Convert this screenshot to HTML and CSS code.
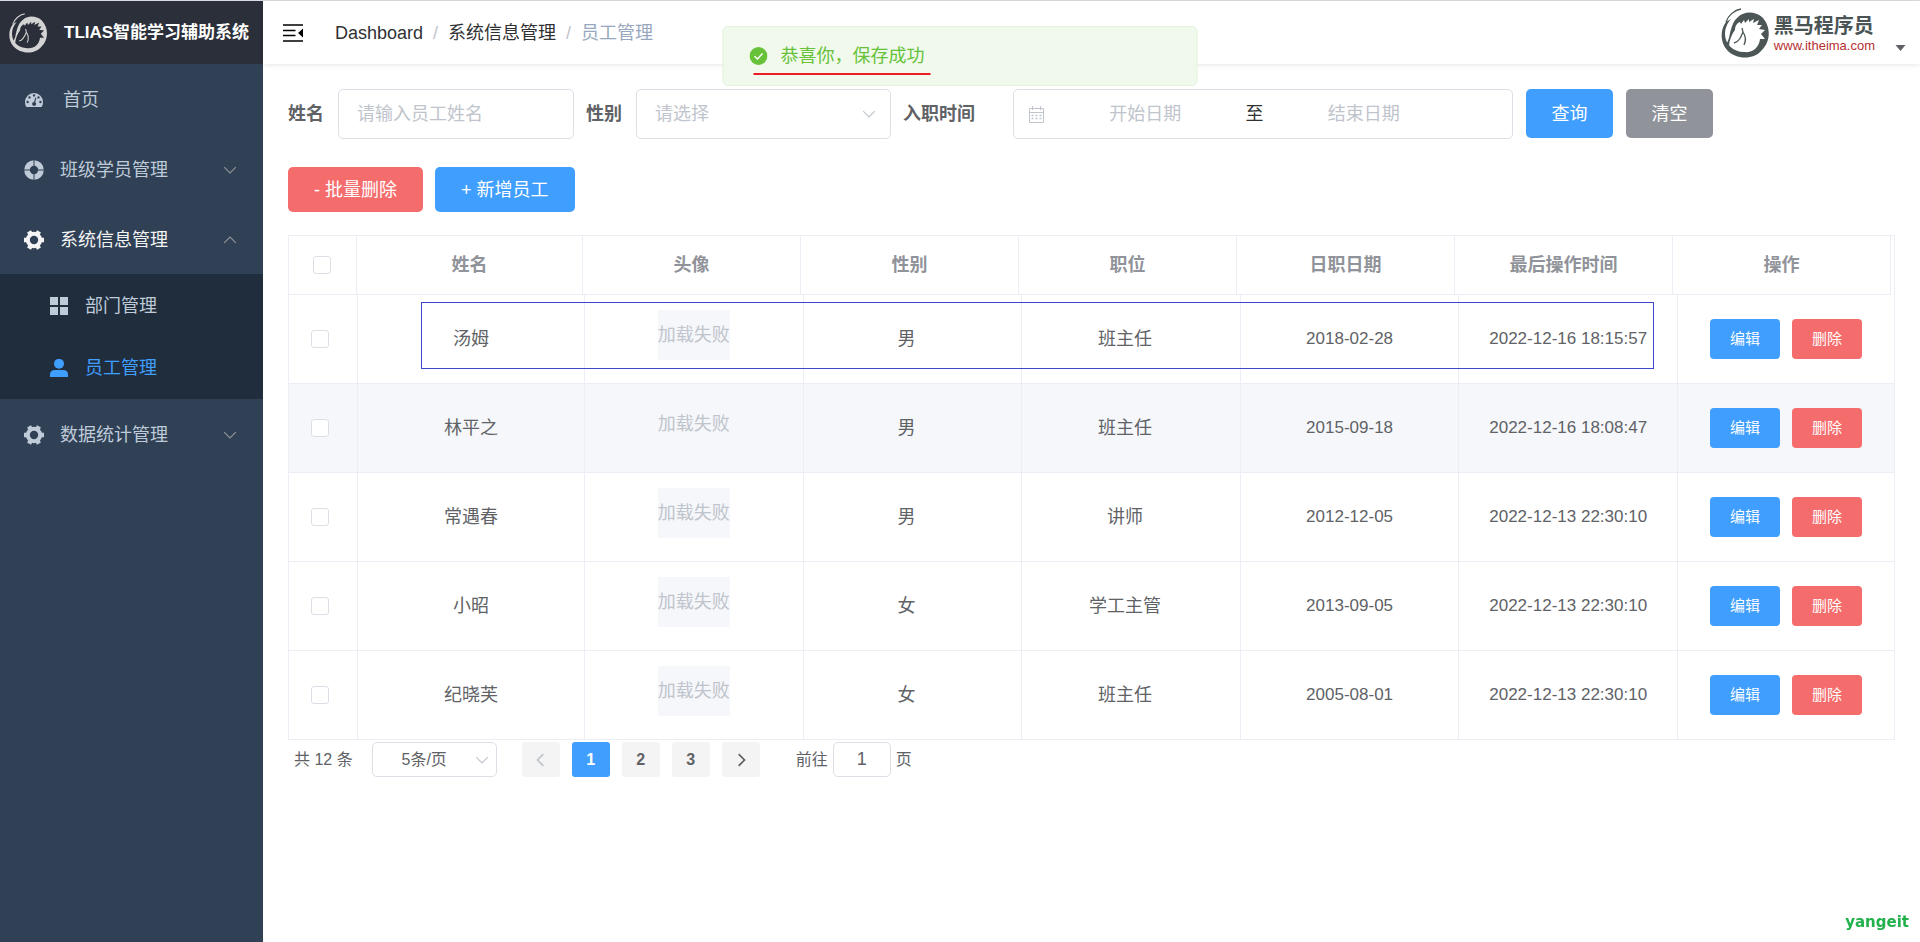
FILE: index.html
```html
<!DOCTYPE html>
<html lang="zh-CN">
<head>
<meta charset="utf-8">
<meta name="viewport" content="width=device-width, initial-scale=1">
<title>TLIAS智能学习辅助系统</title>
<link rel="stylesheet" href="styles.css">
</head>
<body>
<svg class="defs" aria-hidden="true">
  <symbol id="i-down" viewBox="0 0 12 12"><path d="M1 3.500 6 8.500 11 3.500" fill="none" stroke="currentColor"/></symbol>
  <symbol id="i-up" viewBox="0 0 12 12"><path d="M1 8.500 6 3.500 11 8.500" fill="none" stroke="currentColor"/></symbol>
  <symbol id="i-gear" viewBox="0 0 20 20">
    <circle cx="10" cy="10" r="6.200" fill="none" stroke="currentColor" stroke-width="4"/>
    <path fill="none" stroke="currentColor" stroke-width="4.500" d="M17 10H20M3 10H0M13.500 16.060 15 18.660M6.500 3.940 5 1.340M13.500 3.940 15 1.340M6.500 16.060 5 18.660"/>
  </symbol>
  <symbol id="i-horse" viewBox="0 0 48 50">
    <path fill="currentColor" d="M5 14C-1 22-1 34 6 42 14 51 32 53 41 42 50 33 50 18 41 9 34 3 23 3 17 9 12 13 10 20 8 30L6 35 8 38 8.500 34C10 29 11 26 14 22 14 18 16 15 19 14L20 16 23 12 24 15 28 11 28 14 33 11 32 15 38 12 36 17 41 17 38 21 44 22 40 26 44 31 39 31C38 40 31 45 23 44 12 44 4 36 4 26 4 20 6 16 10 11Z"/>
    <path fill="none" stroke="currentColor" stroke-width="1.300" d="M20 1C13 2 7 8 5 14M13 35C18 34 20 29 22 24L21 20M22 24C24 27 26 31 23 37"/>
  </symbol>
</svg>
<div class="app">
  <aside class="sidebar">
    <div class="brand">
      <svg class="brand-logo"><use href="#i-horse"/></svg>
      <h1 class="brand-title">TLIAS智能学习辅助系统</h1>
    </div>
    <nav class="menu">
      <a class="menu-item home" href="#">
        <svg class="menu-icon" viewBox="0 0 20 20"><path fill="currentColor" fill-rule="evenodd" d="M10 3a9 9 0 0 0-9 9.200c0 1.700.400 3.200 1.200 4.500.200.300.400.300.700.300h14.200c.300 0 .500 0 .700-.300.800-1.300 1.200-2.800 1.200-4.500A9 9 0 0 0 10 3ZM10 4.200a1.200 1.200 0 1 1 0 2.400 1.200 1.200 0 0 1 0-2.400ZM5.500 6.200a1.200 1.200 0 1 1 0 2.400 1.200 1.200 0 0 1 0-2.400ZM3.600 10.800a1.200 1.200 0 1 1 0 2.400 1.200 1.200 0 0 1 0-2.400ZM14.500 6.200a1.200 1.200 0 1 1 0 2.400 1.200 1.200 0 0 1 0-2.400ZM16.400 10.800a1.200 1.200 0 1 1 0 2.400 1.200 1.200 0 0 1 0-2.400ZM11.300 7.600l1 .300-1.100 4.300a2 2 0 1 1-1.200-.300Z"/></svg>
        <span>首页</span>
      </a>
      <a class="menu-item" href="#">
        <svg class="menu-icon" viewBox="0 0 20 20"><circle cx="10" cy="10" r="7" fill="none" stroke="currentColor" stroke-width="5.600"/><path class="cut" d="M10 0V6M10 14V20M0 10H6M14 10H20"/></svg>
        <span>班级学员管理</span>
        <svg class="menu-arrow"><use href="#i-down"/></svg>
      </a>
      <a class="menu-item open" href="#">
        <svg class="menu-icon"><use href="#i-gear"/></svg>
        <span>系统信息管理</span>
        <svg class="menu-arrow"><use href="#i-up"/></svg>
      </a>
      <div class="submenu">
        <a class="menu-item sub" href="#">
          <svg class="sub-icon" viewBox="0 0 18 18"><path fill="currentColor" d="M0 0H8V8H0ZM10 0H18V8H10ZM0 10H8V18H0ZM10 10H18V18H10Z"/></svg>
          <span>部门管理</span>
        </a>
        <a class="menu-item sub current" href="#" aria-current="page">
          <svg class="sub-icon" viewBox="0 0 18 18"><circle cx="9" cy="4.800" r="5" fill="currentColor"/><path fill="currentColor" d="M0 18V15.500Q0 11 5 11H13Q18 11 18 15.500V18Z"/></svg>
          <span>员工管理</span>
        </a>
      </div>
      <a class="menu-item" href="#">
        <svg class="menu-icon"><use href="#i-gear"/></svg>
        <span>数据统计管理</span>
        <svg class="menu-arrow"><use href="#i-down"/></svg>
      </a>
    </nav>
  </aside>

  <div class="main">
    <header class="topbar">
      <button class="fold" type="button" aria-label="折叠菜单">
        <svg viewBox="0 0 20 18"><path d="M0 1H20M0 6.500H12.500M0 11.500H12.500M0 17H20" fill="none" stroke="#000" stroke-width="1.600"/><path d="M20 4.500V13.500L15 9Z"/></svg>
      </button>
      <nav class="crumbs" aria-label="路径">
        <a href="#">Dashboard</a><span class="sep">/</span><a href="#">系统信息管理</a><span class="sep">/</span><span class="here">员工管理</span>
      </nav>
      <button class="account" type="button" aria-label="账户菜单">
        <svg class="account-logo"><use href="#i-horse"/></svg>
        <span class="account-text"><strong>黑马程序员</strong><span>www.itheima.com</span></span>
        <svg class="caret" viewBox="0 0 10 6"><path d="M0 0H10L5 6Z" fill="currentColor"/></svg>
      </button>
    </header>

    <main class="content">
      <form class="filters">
        <label for="f-name">姓名</label>
        <input class="field name-field" id="f-name" type="text" placeholder="请输入员工姓名">
        <label for="f-gender">性别</label>
        <div class="select gender-field">
          <select class="field" id="f-gender"><option>请选择</option><option>男</option><option>女</option></select>
          <svg class="select-arrow"><use href="#i-down"/></svg>
        </div>
        <label class="wide" for="f-start">入职时间</label>
        <div class="range field">
          <svg class="calendar" viewBox="0 0 17 17"><path fill="none" stroke="currentColor" d="M1.500 2.500H15.500V16.500H1.500ZM1.500 6.500H15.500M4.500 0V4M12.500 0V4"/><path stroke="currentColor" stroke-width="1.500" stroke-dasharray="2 2" d="M3.500 9.500H14M3.500 12.500H14"/></svg>
          <input id="f-start" type="text" placeholder="开始日期">
          <span>至</span>
          <input type="text" placeholder="结束日期" aria-label="结束日期">
        </div>
        <button class="btn primary search" type="button">查询</button>
        <button class="btn info search" type="reset">清空</button>
      </form>

      <div class="actions">
        <button class="btn danger" type="button">- 批量删除</button>
        <button class="btn primary" type="button">+ 新增员工</button>
      </div>

      <div class="table-wrap">
        <table class="grid">
          <thead>
            <tr><th class="pick"><input type="checkbox" aria-label="全选"></th><th class="name">姓名</th><th>头像</th><th>性别</th><th>职位</th><th>日职日期</th><th>最后操作时间</th><th>操作</th></tr>
          </thead>
          <tbody>
            <tr><td class="pick"><input type="checkbox" aria-label="选择汤姆"></td><td class="name">汤姆</td><td class="photo"><span>加载失败</span></td><td class="tight">男</td><td class="tight">班主任</td><td class="date">2018-02-28</td><td class="date">2022-12-16 18:15:57</td><td><div class="ops"><button class="btn small primary" type="button">编辑</button><button class="btn small danger" type="button">删除</button></div></td></tr>
            <tr class="hover"><td class="pick"><input type="checkbox" aria-label="选择林平之"></td><td class="name">林平之</td><td class="photo"><span>加载失败</span></td><td class="tight">男</td><td class="tight">班主任</td><td class="date">2015-09-18</td><td class="date">2022-12-16 18:08:47</td><td><div class="ops"><button class="btn small primary" type="button">编辑</button><button class="btn small danger" type="button">删除</button></div></td></tr>
            <tr><td class="pick"><input type="checkbox" aria-label="选择常遇春"></td><td class="name">常遇春</td><td class="photo"><span>加载失败</span></td><td class="tight">男</td><td class="tight">讲师</td><td class="date">2012-12-05</td><td class="date">2022-12-13 22:30:10</td><td><div class="ops"><button class="btn small primary" type="button">编辑</button><button class="btn small danger" type="button">删除</button></div></td></tr>
            <tr><td class="pick"><input type="checkbox" aria-label="选择小昭"></td><td class="name">小昭</td><td class="photo"><span>加载失败</span></td><td class="tight">女</td><td class="tight">学工主管</td><td class="date">2013-09-05</td><td class="date">2022-12-13 22:30:10</td><td><div class="ops"><button class="btn small primary" type="button">编辑</button><button class="btn small danger" type="button">删除</button></div></td></tr>
            <tr><td class="pick"><input type="checkbox" aria-label="选择纪晓芙"></td><td class="name">纪晓芙</td><td class="photo"><span>加载失败</span></td><td class="tight">女</td><td class="tight">班主任</td><td class="date">2005-08-01</td><td class="date">2022-12-13 22:30:10</td><td><div class="ops"><button class="btn small primary" type="button">编辑</button><button class="btn small danger" type="button">删除</button></div></td></tr>
          </tbody>
        </table>
        <div class="mark"></div>
      </div>

      <nav class="pager" aria-label="分页">
        <span class="total">共 12 条</span>
        <div class="select size-field">
          <select class="field" aria-label="每页条数"><option>5条/页</option><option>10条/页</option></select>
          <svg class="select-arrow"><use href="#i-down"/></svg>
        </div>
        <div class="pages">
          <button type="button" disabled aria-label="上一页"><svg viewBox="0 0 12 12"><path d="M8 1 3 6 8 11"/></svg></button>
          <button class="on" type="button">1</button>
          <button type="button">2</button>
          <button type="button">3</button>
          <button type="button" aria-label="下一页"><svg viewBox="0 0 12 12"><path d="M4 1 9 6 4 11"/></svg></button>
        </div>
        <label class="jump">前往<input class="field" type="text" value="1">页</label>
      </nav>
    </main>
  </div>
</div>

<div class="toast" role="status">
  <svg viewBox="0 0 18 18"><circle cx="9" cy="9" r="9" fill="currentColor"/><path d="M5 9.200 8 12 13 6.500" fill="none" stroke="#fff" stroke-width="1.500"/></svg>
  <p>恭喜你，保存成功</p>
  <i class="toast-line"></i>
</div>
<div class="signature">yangeit</div>
</body>
</html>
```
FILE: styles.css
```css
* { box-sizing: border-box; }

body {
  margin: 0;
  background: #fff;
  color: #606266;
  font: 18px/24px "Liberation Sans", "Noto Sans CJK SC", sans-serif;
}

a { color: inherit; text-decoration: none; }
button, input, select { font: inherit; color: inherit; margin: 0; }
button { border: 0; padding: 0; background: none; cursor: pointer; }
.defs { position: absolute; width: 0; height: 0; }

.app {
  display: flex;
  min-height: 100vh;
  border-top: 1px solid #dcdde2;
}

/* Sidebar */
.sidebar { flex: 0 0 263px; background: #304156; color: #bfcbd9; }

.brand {
  display: flex;
  align-items: center;
  gap: 16px;
  height: 63px;
  padding-left: 8px;
  background: #2b2f3a;
  color: #fff;
}
.brand-logo { flex: none; width: 40px; height: 40px; color: #d3d3d3; }
.brand-title { margin: 0; font-size: 17px; white-space: nowrap; }

.menu-item { display: flex; align-items: center; height: 70px; padding: 1px 26px 0 24px; gap: 16px; }
.menu-icon { width: 20px; height: 20px; }
.menu-icon .cut { stroke: #304156; }
.menu-item.home { gap: 19px; }
.menu-arrow { width: 14px; height: 14px; margin-left: auto; color: #909399; }
.menu-item.open { color: #f4f4f5; }
.submenu { padding-bottom: 1px; background: #1f2d3d; }
.menu-item.sub { height: 62px; padding-left: 50px; gap: 17px; }
.sub-icon { width: 18px; height: 18px; }
.menu-item.current { color: #409eff; }

/* Top bar */
.main { flex: 1; min-width: 0; }
.topbar {
  display: flex;
  align-items: center;
  height: 63px;
  padding: 0 14px 0 20px;
  box-shadow: 0 1px 5px rgba(0, 21, 41, .1);
}
.fold { width: 20px; height: 18px; }
.fold svg { display: block; }
.crumbs { display: flex; gap: 10px; margin-left: 32px; color: #303133; }
.crumbs .sep { color: #c0c4cc; }
.crumbs .here { color: #97a8be; }
.account { display: flex; align-items: center; gap: 5px; margin-left: auto; }
.account-logo { width: 48px; height: 50px; color: #4c5657; }
.account-text { display: grid; text-align: left; }
.account-text strong { color: #4a5455; font-size: 20px; line-height: 26px; }
.account-text span { color: #b52f2f; font-size: 13px; line-height: 14px; }
.caret { width: 11px; height: 6px; margin: 30px 0 0 15px; }

/* Shared controls */
.field {
  height: 50px;
  border: 1px solid #dcdfe6;
  border-radius: 5px;
  background: #fff;
  outline: 0;
}
.select { position: relative; }
.select .field { width: 100%; padding: 0 18px; appearance: none; }
.select-arrow {
  position: absolute;
  top: 50%;
  right: 15px;
  width: 14px;
  height: 14px;
  margin-top: -7px;
  color: #c0c4cc;
  pointer-events: none;
}
::placeholder { color: #c0c4cc; opacity: 1; }

.btn { height: 45px; padding: 0 26px; border-radius: 5px; color: #fff; white-space: nowrap; }
.primary { background: #409eff; }
.danger { background: #f56c6c; }
.info { background: #909399; }

/* Filters */
.content { padding: 25px; }
.filters { display: flex; align-items: center; }
.filters label { margin-right: 14px; font-weight: 700; white-space: nowrap; }
.filters label.wide { width: 96px; }
.name-field { width: 236px; padding: 0 18px; margin-right: 12px; }
.gender-field { width: 255px; margin-right: 12px; }
.gender-field .field { color: #c0c4cc; }
.range { display: flex; align-items: center; width: 500px; padding: 0 48px 0 14px; }
.range input { flex: 1; min-width: 0; border: 0; padding: 0; outline: 0; text-align: center; }
.range span { color: #303133; }
.calendar { flex: none; width: 17px; height: 17px; color: #c0c4cc; }
.search { align-self: flex-start; width: 87px; height: 49px; padding: 0; margin-left: 13px; }

.actions { display: flex; gap: 12px; margin: 28px 0 23px; }

/* Table */
.table-wrap { position: relative; border: 1px solid #ebeef5; border-bottom: 0; }
.grid { display: block; }
.grid thead, .grid tbody {
  display: table;
  width: 100%;
  table-layout: fixed;
  border-spacing: 0;
}
.grid thead { width: calc(100% - 3px); }
.grid th, .grid td {
  padding: 0;
  border: solid #ebeef5;
  border-width: 0 1px 1px 0;
  text-align: center;
}
.grid th { height: 59px; color: #909399; }
.grid td { height: 89px; }
.grid .pick { width: 69px; padding-right: 6px; }
.grid th.pick { width: 68px; padding-right: 2px; }
.grid .name { width: 227px; }
.grid th.name { width: 226px; }
.grid .tight { padding-right: 12px; }
.grid .date { font-size: 17px; }
.grid td:last-child { width: 216px; border-right: 0; }
.grid .hover { background: #f5f7fa; }
.pick input {
  display: block;
  width: 18px;
  height: 18px;
  margin: 0 auto;
  border: 1px solid #dcdfe6;
  border-radius: 3px;
  background: #fff;
  appearance: none;
}
.photo span {
  display: block;
  width: 72px;
  margin: 0 auto 8px;
  background: #f5f7fa;
  color: #c0c4cc;
  line-height: 50px;
}
.ops { display: flex; justify-content: center; gap: 12px; }
.small { width: 70px; height: 40px; padding: 0; border-radius: 4px; font-size: 15px; }
.mark {
  position: absolute;
  top: 66px;
  right: 240px;
  left: 132px;
  height: 67px;
  border: 1px solid #3f48cc;
  pointer-events: none;
}

/* Pagination */
.pager { display: flex; align-items: center; margin-top: 2px; padding-left: 6px; font-size: 16px; }
.pager .field { height: 35px; }
.total { margin-right: 19px; }
.size-field { width: 125px; }
.size-field .field { padding: 0 20px 0 0; text-align: center; text-align-last: center; }
.size-field .select-arrow { right: 8px; }
.pages { display: flex; gap: 12px; margin: 0 36px 0 25px; }
.pages button { width: 38px; height: 35px; border-radius: 3px; background: #f4f4f5; font-weight: 700; }
.pages svg { display: block; width: 14px; height: 14px; margin: auto; fill: none; stroke: #606266; stroke-width: 1.5; }
.pages button:disabled svg { stroke: #c0c4cc; }
.pages .on { background: #409eff; color: #fff; }
.jump { display: flex; align-items: center; gap: 5px; }
.jump .field { width: 58px; text-align: center; font-size: 18px; }

/* Success message */
.toast {
  position: fixed;
  top: 26px;
  left: 50%;
  display: flex;
  align-items: center;
  gap: 13px;
  width: 475px;
  height: 60px;
  padding: 0 26px;
  border: 1px solid #e1f3d8;
  border-radius: 5px;
  background: #f0f9eb;
  color: #67c23a;
  transform: translateX(-50%);
}
.toast svg { width: 18px; height: 18px; }
.toast p { margin: 0; }
.toast-line { position: absolute; top: 46px; left: 30px; width: 177px; height: 2px; background: #ed1c24; }

.signature {
  position: fixed;
  right: 11px;
  bottom: 10px;
  color: #22b14c;
  font: 700 15px/20px "DejaVu Sans", sans-serif;
}
```
